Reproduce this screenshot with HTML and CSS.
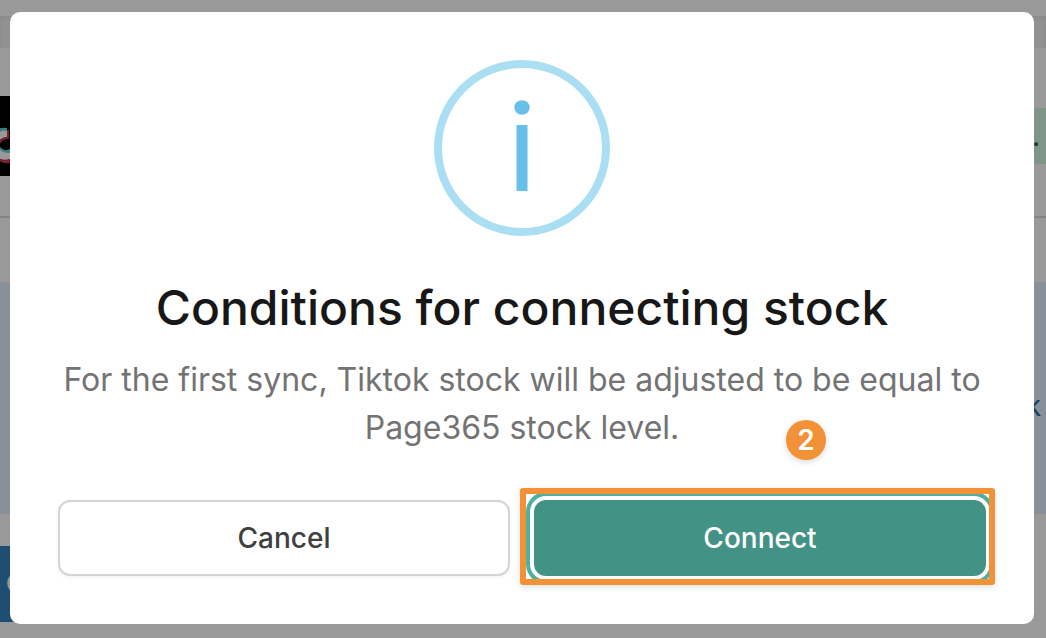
FILE: index.html
```
<!DOCTYPE html>
<html lang="en">
<head>
  <meta charset="utf-8">
  <meta name="viewport" content="width=device-width, initial-scale=1">
  <title>Connect stock</title>
  <link rel="stylesheet" href="styles.css">
</head>
<body>
  <div class="page" aria-hidden="true">
    <div class="topbar"></div>
    <div class="toolbar"></div>
    <div class="shop">
      <svg class="shop-logo" viewBox="0 0 80 80" width="80" height="80">
        <rect width="80" height="80" fill="#000"/>
        <g transform="translate(70 0)">
          <path d="M-8 36Q-3 31 7 32V35H-8Z" fill="#62d5da"/>
          <path d="M-8 39Q-3 34 7 35V41Q0 42 -3 47L-8 50Z" fill="#fff"/>
          <path d="M7 34H9V43Q2 43 0 48Q-1 54 3 58L-1 55Q-5 49 -1 45Q2 41 7 41Z" fill="#c8394d"/>
          <path d="M0 51Q4 56 10 53V57Q3 58 0 54Z" fill="#62d5da"/>
          <path d="M-8 50L-2 51Q1 57 10 57V63Q0 67 -8 61Z" fill="#fff"/>
          <path d="M-2 62Q4 65 10 63V67Q2 68 -2 64Z" fill="#c8394d"/>
        </g>
      </svg>
      <span class="shop-status">.</span>
    </div>
    <div class="content">
      <div class="notice">k</div>
      <div class="save">C</div>
    </div>
  </div>

  <div class="overlay">
    <div class="modal" role="dialog" aria-modal="true" aria-labelledby="modalTitle" aria-describedby="modalText">
      <svg class="modal-icon" viewBox="0 0 176 176" width="176" height="176" aria-hidden="true">
        <circle cx="88" cy="88" r="84" fill="none" stroke="#a9def3" stroke-width="8"/>
        <ellipse cx="88" cy="47.500" rx="7.700" ry="7.300" fill="#66c0e8"/>
        <rect x="82.500" y="65" width="11" height="66" fill="#66c0e8"/>
      </svg>
      <h1 class="modal-title" id="modalTitle">Conditions for connecting stock</h1>
      <p class="modal-text" id="modalText">For the first sync, Tiktok stock will be adjusted to be equal to Page365 stock level.</p>
      <div class="actions">
        <button class="btn btn-secondary" type="button">Cancel</button>
        <div class="step">
          <button class="btn btn-primary" type="button">Connect</button>
          <span class="step-frame"></span>
          <span class="step-number">2</span>
        </div>
      </div>
    </div>
  </div>
</body>
</html>
```

FILE: styles.css
```
* {
  box-sizing: border-box;
}

body {
  margin: 0;
  min-height: 100vh;
  overflow: hidden;
  font-family: Inter, "Liberation Sans", sans-serif;
  background: #fff;
}

/* Page behind the dialog */
.page {
  position: absolute;
  inset: 0;
  overflow: hidden;
}

.topbar {
  height: 16px;
}

.toolbar {
  height: 32px;
  background: #f3f3f3;
  box-shadow: inset 0 2px 4px #e4e4e4;
}

.shop {
  display: flex;
  align-items: center;
  justify-content: space-between;
  height: 170px;
  padding-top: 8px;
  border-bottom: 2px solid #dddddd;
}

.shop-logo {
  margin-left: -70px;
}

.shop-status {
  width: 40px;
  height: 56px;
  padding-left: 26px;
  font-size: 28px;
  line-height: 56px;
  background: #d8f7e7;
  color: #206048;
}

.content {
  padding: 64px 0 16px;
}

.notice {
  height: 232px;
  padding: 104px 5px 0 0;
  font-size: 28px;
  line-height: 40px;
  text-align: right;
  background: #e3f1ff;
  color: #266ca8;
}

.save {
  width: 300px;
  height: 76px;
  margin-top: 32px;
  padding-left: 6px;
  font-size: 24px;
  font-weight: 500;
  line-height: 76px;
  background: #3483be;
  color: #fff;
}

/* Dialog */
.overlay {
  position: relative;
  min-height: 100vh;
  padding: 12px 12px 14px 10px;
  background: rgba(0, 0, 0, 0.4);
}

.modal {
  display: flex;
  flex-direction: column;
  align-items: center;
  padding: 48px;
  border-radius: 10px;
  background: #fff;
  text-align: center;
}

.modal-icon {
  display: block;
}

.modal-title {
  margin: 40px 0 16px;
  font-size: 48px;
  font-weight: 500;
  line-height: 64px;
  color: #171717;
}

.modal-text {
  margin: 0;
  font-size: 32px;
  line-height: 48px;
  color: #737373;
}

.actions {
  display: grid;
  grid-template-columns: 1fr 1fr;
  gap: 24px;
  width: 100%;
  margin-top: 48px;
}

.btn {
  width: 100%;
  height: 76px;
  padding: 0;
  border-radius: 12px;
  font-family: inherit;
  font-size: 28px;
  font-weight: 500;
  line-height: 40px;
  cursor: pointer;
}

.btn-primary {
  display: block;
  border: none;
  background: #439286;
  color: #fff;
  box-shadow: 0 0 0 4px #fff, 0 0 0 8px #4fb0a2;
}

.btn-secondary {
  border: 2px solid #d4d4d4;
  background: #fff;
  color: #404040;
  box-shadow: 0 2px 4px rgba(0, 0, 0, 0.05);
}

/* Step highlight round the confirm button */
.step {
  position: relative;
}

.step-frame {
  position: absolute;
  inset: -12px -9px -9px -14px;
  border: 6px solid #f29135;
  border-radius: 3px;
  box-shadow: 0 2px 6px rgba(0, 0, 0, 0.12);
  pointer-events: none;
}

.step-number {
  position: absolute;
  top: -80px;
  right: 160px;
  width: 40px;
  height: 40px;
  border-radius: 50%;
  background: #f29135;
  color: #fff;
  font-size: 28px;
  font-weight: 600;
  line-height: 40px;
  text-align: center;
  box-shadow: 0 2px 6px rgba(0, 0, 0, 0.15);
}
```
